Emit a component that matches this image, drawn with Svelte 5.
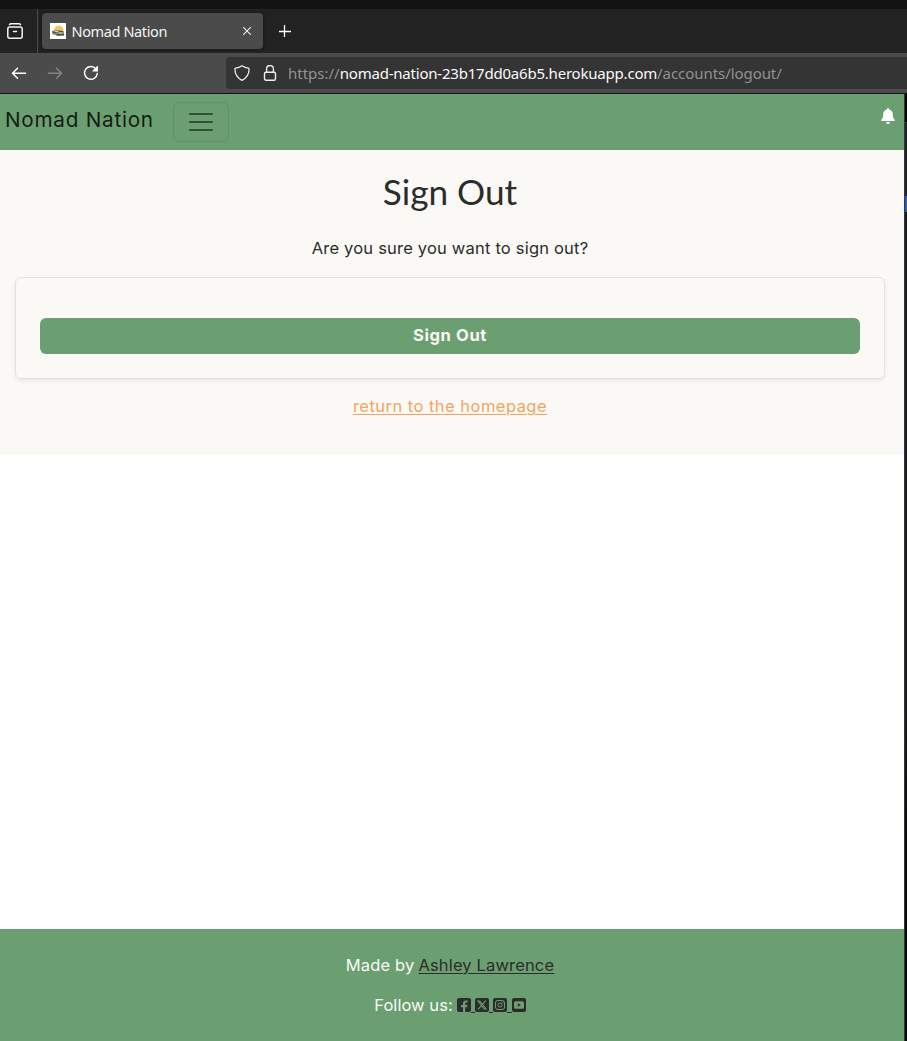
<script>
  const host = 'nomad-nation-23b17dd0a6b5.herokuapp.com';
</script>

<div class="window">
  <div class="titlebar"></div>
  <div class="tabs">
    <div class="recent">
      <svg width="16" height="16" viewBox="0 0 16 16" fill="none" stroke="#f4f4f4" stroke-width="1.5" stroke-linecap="round" stroke-linejoin="round">
        <path d="M2.500 1.700Q3 .8 4 .8h8q1 0 1.500.9" /><rect x=".8" y="4" width="14.400" height="11.200" rx="2" /><path d="M6.500 8.500h3" />
      </svg>
    </div>
    <div class="tab">
      <svg class="favicon" width="16" height="16" viewBox="0 0 16 16">
        <path fill="#fff" d="M0 0h16v16H0z" /><path fill="#f7c253" d="M4 8a4.700 4.700 0 0 1 9.500-1v3H4z" />
        <path fill="#8d8778" d="M2 8l5-1 6.500 1 .8 4-6 .8-6-1.600z" /><path fill="#3a3c38" d="M2 8.500l4 .5 1 1-4-.5zM7 11.300h7v1.200H6zM9 8h4v.8H9z" /><path fill="#d8d6c9" d="M5 8h3v1H5zM9 9.500h3v1H9z" />
      </svg>
      <span class="tabname">Nomad Nation</span>
      <svg class="close" width="8" height="8" viewBox="0 0 8 8" stroke="#eee" stroke-width="1.100"><path d="M0 0l8 8M8 0L0 8" /></svg>
    </div>
    <svg class="plus" width="12" height="12" viewBox="0 0 12 12" stroke="#fff" stroke-width="1.300"><path d="M0 6.500h12M5.500 0v12" /></svg>
  </div>
  <div class="toolbar">
    <div class="controls">
      <svg width="16" height="16" viewBox="0 0 16 16" fill="none" stroke="#fff" stroke-width="1.500" stroke-linecap="round" stroke-linejoin="round"><path d="M14.500 8.200H1.500M6.500 3.200l-5 5 5 5" /></svg>
      <svg width="16" height="16" viewBox="0 0 16 16" fill="none" stroke="#858585" stroke-width="1.500" stroke-linecap="round" stroke-linejoin="round"><path d="M1.500 8.200h13M9.500 3.200l5 5-5 5" /></svg>
      <svg width="16" height="16" viewBox="0 0 16 16" fill="none" stroke="#fff" stroke-width="1.500" stroke-linecap="round"><path d="M12.800 3.700A6.400 6.400 0 1 0 14.300 8.500" /><path fill="#fff" stroke="none" d="M15 1v5.500H9.500q-.5-.2 0-.7L14.300 1q.5-.5.7 0z" /></svg>
    </div>
    <div class="address">
      <svg width="16" height="16" viewBox="0 0 16 16" fill="none" stroke="#ededed" stroke-width="1.300" stroke-linejoin="round"><path d="M8 .8C6.200 2 3.500 3 1.500 3.200Q.9 3.300.9 4C1 8.500 3.200 13 8 15.300 12.800 13 15 8.500 15.100 4q0-.7-.6-.8C12.500 3 9.800 2 8 .8z" /></svg>
      <svg width="14" height="16" viewBox="0 0 14 16" fill="none" stroke="#ededed" stroke-width="1.400"><rect x="1.500" y="7.200" width="11" height="8" rx="1.500" /><path d="M3.600 7V3.900a3.400 3.400 0 0 1 6.800 0V7" /></svg>
      <div class="url"><span class="scheme">https://</span><span class="host">{host}</span><span class="path">/accounts/logout/</span></div>
    </div>
  </div>
  <div class="viewport">
    <div class="page">
      <nav>
        <a class="brand" href="#home">Nomad Nation</a>
        <button class="toggler" aria-label="Menu"><svg width="30" height="30" viewBox="0 0 30 30" stroke="#2f5135" stroke-width="2" stroke-linecap="round"><path d="M4 7h22M4 15h22M4 23h22" /></svg></button>
        <svg class="bell" width="14" height="16" viewBox="0 0 14 16" fill="#fff"><path d="M7 0a1 1 0 0 0-1 1v.5C3.700 2 2.200 3.800 2.200 6.200c0 3-.5 4-1.900 5.500-.6.600-.2 1.300.5 1.300h12.400c.7 0 1.100-.7.500-1.300-1.400-1.500-1.900-2.500-1.900-5.500C11.800 3.800 10.300 2 8 1.500V1a1 1 0 0 0-1-1zM5 14h4a2 2 0 0 1-4 0z" /></svg>
      </nav>
      <main>
        <h1>Sign Out</h1>
        <p><span class="question">Are you sure you want to sign out?</span></p>
        <div class="card"><button class="submit"><span>Sign Out</span></button></div>
        <a class="return" href="#home">return to the homepage</a>
      </main>
      <footer>
        <div class="line"><span class="made">Made by</span><a class="author" href="#author">Ashley Lawrence</a></div>
        <div class="line"><span class="follow">Follow us:</span>
          <span class="social">
            <svg width="14" height="14" viewBox="0 0 14 14"><rect width="14" height="14" rx="2" fill="#2c2c2c" /><path fill="#6b9f71" d="M6 14V9.200H4V7h2V5.600C6 3.500 7.100 2.400 9 2.400q.9 0 1.600.2v1.800H9.400C8.500 4.400 8.200 4.900 8.200 5.600V7h2.200L10 9.200H8.200V14z" /></svg><i></i>
            <svg width="14" height="14" viewBox="0 0 14 14"><rect width="14" height="14" rx="2" fill="#2c2c2c" /><path d="M3 3h1.800l6.200 8H9.200zM10.700 2.700L7.600 6.300M6.200 7.900l-3.100 3.500" fill="none" stroke="#6b9f71" stroke-width="1.100" /></svg><i></i>
            <svg width="14" height="14" viewBox="0 0 14 14"><rect width="14" height="14" rx="2" fill="#2c2c2c" /><g fill="none" stroke="#6b9f71"><rect x="2.500" y="2.500" width="9" height="9" rx="2.400" /><circle cx="7" cy="7" r="2.100" /></g><circle cx="9.700" cy="4.300" r=".6" fill="#6b9f71" /></svg><i></i>
            <svg width="14" height="14" viewBox="0 0 14 14"><rect width="14" height="14" rx="2" fill="#2c2c2c" /><rect x="2" y="3.200" width="10" height="7.600" rx="1.600" fill="#6b9f71" /><path d="M5.800 5.300v3.400l3-1.700z" fill="#2c2c2c" /></svg>
          </span>
        </div>
      </footer>
    </div>
    <div class="edge"><b></b><b class="upper"></b><b class="blue"></b></div>
  </div>
</div>

<style>
  :global(body) { margin: 0; background: #151515; overflow: hidden; }
  * { box-sizing: border-box; }
  svg { display: block; flex: none; }
  .window { width: 907px; height: 1041px; display: flex; flex-direction: column; font-family: Inter, sans-serif; overflow: hidden; }
  .titlebar { height: 9px; background: #131313; }
  .tabs { height: 44px; background: #222; display: flex; align-items: center; }
  .recent { width: 38px; height: 44px; padding-left: 7px; border-right: 1px solid #4b4b4b; display: flex; align-items: center; }
  .tab { width: 221px; height: 36px; margin-left: 4px; padding: 0 12px 0 8px; background: #4b4b4b; border-radius: 4px; display: flex; align-items: center; box-shadow: 0 0 3px #111; }
  .tabname { margin-left: 5.5px; font: 14.5px "Noto Sans", sans-serif; color: #f5f5f5; letter-spacing: -.38px; white-space: nowrap; }
  .close { margin-left: auto; }
  .plus { margin-left: 16px; }
  .toolbar { height: 41px; background: #4b4b4b; border-bottom: 1px solid #151515; display: flex; align-items: center; justify-content: space-between; }
  .controls { display: flex; gap: 20px; padding-left: 11px; }
  .address { width: 681px; height: 32px; background: #343434; border-radius: 4px 0 0 4px; display: flex; align-items: center; padding-left: 8px; }
  .address svg + svg { margin-left: 13px; }
  .url { margin-left: 11px; display: flex; font: 15px "Noto Sans", sans-serif; color: #929292; white-space: nowrap; }
  .host { color: #fafafa; letter-spacing: -.21px; }
  .path { letter-spacing: -.06px; }
  .viewport { flex: 1; display: flex; min-height: 0; }
  .page { width: 904px; background: #fff; display: flex; flex-direction: column; color: #2c2c2c; font-size: 16.5px; }
  nav { height: 56px; background: #6b9f71; display: flex; align-items: center; padding: 0 9px 0 5px; }
  .brand { width: 168px; font-size: 20.7px; letter-spacing: .75px; line-height: 24px; margin-bottom: 4px; color: #131d15; text-decoration: none; white-space: nowrap; }
  .toggler { width: 56px; height: 40px; border: 1px solid #61916a; border-radius: 6px; background: none; padding: 0; display: flex; justify-content: center; align-items: center; }
  .bell { margin-left: auto; margin-bottom: 12px; }
  main { height: 305px; background: #faf9f6; padding: 20px 19px 0 15px; text-align: center; }
  h1 { margin: 0; font: 400 35.2px/43px Lato, sans-serif; }
  p { margin: 23px 0 17px; line-height: 24px; letter-spacing: .2px; }
  .card { height: 102px; padding: 40px 24px 24px; border: 1px solid #dee2e6; border-radius: 6px; box-shadow: 0 2px 4px rgba(0,0,0,.075); }
  .submit { display: block; width: 100%; height: 36px; border: 0; border-radius: 6px; background: #6b9f71; color: #faf9f6; font: 700 16.6px/24px Inter, sans-serif; letter-spacing: .6px; padding: 0 0 2px; }
  .return { display: inline-block; margin-top: 15px; line-height: 24px; letter-spacing: .47px; color: #f4a460; text-underline-offset: 2px; text-decoration-thickness: 1px; }
  footer { margin-top: auto; height: 112px; background: #6b9f71; color: #faf9f6; padding: 24px 4px 0 0; letter-spacing: .15px; }
  .line { height: 24px; margin-bottom: 16px; display: flex; justify-content: center; align-items: center; line-height: 24px; white-space: nowrap; }
  .author { margin-left: 4px; color: #2c2c2c; text-underline-offset: 2px; text-decoration-thickness: 1px; }
  .follow { letter-spacing: .05px; }
  .social { margin-left: 4px; display: flex; }
  .social i { width: 4.33px; height: 15px; border-bottom: 1px solid #2c2c2c; }
  .edge { width: 3px; background: linear-gradient(#1b1d22 65%, #08090b 80%); border-left: 1px solid #36363a; }
  .edge b { display: block; height: 28px; background: #000; }
  .edge .upper { height: 74px; background: #20232a; border-top: 1px solid #3a3a3e; }
  .edge .blue { height: 16px; background: #2b5da8; }
</style>
